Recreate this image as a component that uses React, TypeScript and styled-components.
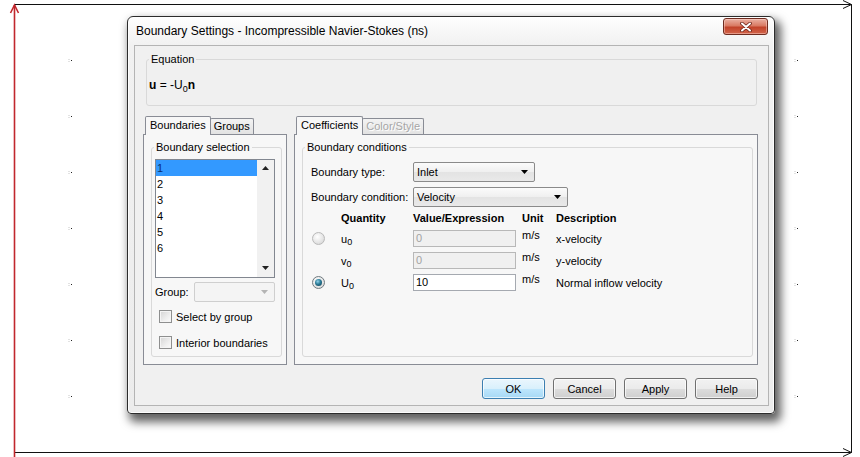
import React from 'react'
import styled, { createGlobalStyle } from 'styled-components'

const GlobalStyle = createGlobalStyle`
  html, body {
    margin: 0;
    padding: 0;
    background: #fff;
  }
  body {
    font-family: "Liberation Sans", Arial, sans-serif;
    font-size: 11px;
    color: #000;
  }
`

const dotRows = [60, 116, 172, 228, 284, 340, 396]
const listItems = ['1', '2', '3', '4', '5', '6']

const Arrow = ({ down, color = '#222' }: { down?: boolean; color?: string }) => (
  <svg width='7' height='4' viewBox='0 0 7 4'>
    <path d={down ? 'M0 0 H7 L3.5 4 Z' : 'M0 4 H7 L3.5 0 Z'} fill={color} />
  </svg>
)

function Backdrop() {
  return (
    <Canvas width={860} height={457} viewBox='0 0 860 457'>
      <g stroke='#111' strokeWidth={1} fill='none'>
        <path d='M15 4.5 H851.5 M15 452.5 H851.5 M851.5 4.5 V452.5' />
        <path d='M843 0.5 L851.5 4.5 L843 8.5 M843 448.5 L851.5 452.5 L843 456.5' />
      </g>
      <g stroke='#c1272d' strokeWidth={1.6} fill='none'>
        <path d='M14.5 5 V457' />
        <path d='M10.5 13 L14.5 5 L18.5 13' />
      </g>
      {dotRows.map(y => (
        <g key={y}>
          <rect x={68} y={y - 1} width={2} height={1} fill='#e2e2e2' />
          <rect x={68} y={y + 1} width={2} height={1} fill='#e2e2e2' />
          <rect x={71} y={y} width={1} height={1} fill='#222' />
          <rect x={794} y={y - 1} width={2} height={1} fill='#e2e2e2' />
          <rect x={794} y={y + 1} width={2} height={1} fill='#e2e2e2' />
          <rect x={797} y={y} width={1} height={1} fill='#222' />
        </g>
      ))}
    </Canvas>
  )
}

function CloseGlyph() {
  return (
    <svg width='12' height='10' viewBox='0 0 12 10'>
      <path d='M2 1.5 L10 8.5 M10 1.5 L2 8.5' stroke='#6b2418' strokeWidth={3.6} strokeLinecap='round' />
      <path d='M2 1.5 L10 8.5 M10 1.5 L2 8.5' stroke='#fff' strokeWidth={2} strokeLinecap='round' />
    </svg>
  )
}

export default function App() {
  return (
    <Desktop>
      <GlobalStyle />
      <Backdrop />
      <Window>
        <TitleBar>
          <Title>Boundary Settings - Incompressible Navier-Stokes (ns)</Title>
          <CloseButton><CloseGlyph /></CloseButton>
        </TitleBar>
        <Client>
          <EquationGroup>
            <Legend>Equation</Legend>
            <Formula>
              <b>u</b> = -U<Sub>0</Sub><b>n</b>
            </Formula>
          </EquationGroup>

          <Main>
            <Column>
              <TabStrip>
                <Tab $active>Boundaries</Tab>
                <Tab>Groups</Tab>
              </TabStrip>
              <TabPanel $width={144}>
                <Group>
                  <Legend>Boundary selection</Legend>
                  <ListBox>
                    <ListItems>
                      {listItems.map((item, i) => (
                        <ListItem key={item} $selected={i === 0}>{item}</ListItem>
                      ))}
                    </ListItems>
                    <ScrollBar>
                      <Arrow />
                      <Arrow down />
                    </ScrollBar>
                  </ListBox>
                  <GroupRow>
                    <span>Group:</span>
                    <DisabledCombo>
                      <Arrow down color='#b4b4b4' />
                    </DisabledCombo>
                  </GroupRow>
                  <CheckRow $first>
                    <CheckBox />
                    <span>Select by group</span>
                  </CheckRow>
                  <CheckRow>
                    <CheckBox />
                    <span>Interior boundaries</span>
                  </CheckRow>
                </Group>
              </TabPanel>
            </Column>

            <Column>
              <TabStrip>
                <Tab $active>Coefficients</Tab>
                <Tab $disabled>Color/Style</Tab>
              </TabStrip>
              <TabPanel $width={464}>
                <Group>
                  <Legend>Boundary conditions</Legend>
                  <FormGrid>
                    <FieldLabel>Boundary type:</FieldLabel>
                    <Combo $width={122}>
                      <span>Inlet</span>
                      <Arrow down color='#000' />
                    </Combo>
                    <FieldLabel>Boundary condition:</FieldLabel>
                    <Combo $width={155}>
                      <span>Velocity</span>
                      <Arrow down color='#000' />
                    </Combo>

                    <span />
                    <Head>Quantity</Head>
                    <Head>Value/Expression</Head>
                    <Head>Unit</Head>
                    <Head>Description</Head>

                    <Cell><Radio /></Cell>
                    <Cell>u<Sub>0</Sub></Cell>
                    <Cell><TextBox $disabled>0</TextBox></Cell>
                    <Unit>m/s</Unit>
                    <Cell>x-velocity</Cell>

                    <span />
                    <Cell>v<Sub>0</Sub></Cell>
                    <Cell><TextBox $disabled>0</TextBox></Cell>
                    <Unit>m/s</Unit>
                    <Cell>y-velocity</Cell>

                    <Cell><Radio $checked /></Cell>
                    <Cell>U<Sub>0</Sub></Cell>
                    <Cell><TextBox>10</TextBox></Cell>
                    <Unit>m/s</Unit>
                    <Cell>Normal inflow velocity</Cell>
                  </FormGrid>
                </Group>
              </TabPanel>
            </Column>
          </Main>

          <ButtonRow>
            <Button $default>OK</Button>
            <Button>Cancel</Button>
            <Button>Apply</Button>
            <Button>Help</Button>
          </ButtonRow>
        </Client>
      </Window>
    </Desktop>
  )
}

const Desktop = styled.div`
  position: relative;
  width: 860px;
  height: 457px;
  overflow: hidden;
  background: #fff;
`

const Canvas = styled.svg`
  position: absolute;
  left: 0;
  top: 0;
`

const Window = styled.div`
  position: absolute;
  left: 127px;
  top: 16px;
  width: 648px;
  height: 398px;
  box-sizing: border-box;
  display: flex;
  flex-direction: column;
  padding: 0 5px 7px 6px;
  border: 1px solid #2c2c2c;
  border-radius: 6px 6px 4px 4px;
  background: linear-gradient(180deg, #fefefe 0px, #f1f1f1 28px, #ececec 100%);
  box-shadow: inset 0 0 0 1px rgba(255, 255, 255, 0.85), 4px 6px 10px 2px rgba(0, 0, 0, 0.62);
`

const TitleBar = styled.div`
  display: flex;
  align-items: flex-start;
  justify-content: space-between;
  height: 28px;
  flex-shrink: 0;
`

const Title = styled.div`
  margin-top: 7px;
  padding-left: 2px;
  font-family: "Liberation Sans", Arial, sans-serif;
  font-size: 12px;
  line-height: 14px;
  color: #000;
`

const CloseButton = styled.div`
  width: 45px;
  height: 17px;
  margin-top: 1px;
  margin-right: 1px;
  box-sizing: border-box;
  display: flex;
  align-items: center;
  justify-content: center;
  border: 1px solid #6e2c20;
  border-radius: 3px;
  background: linear-gradient(180deg, #eab0a2 0%, #d97a63 45%, #c2432a 55%, #d2654b 100%);
  box-shadow: inset 0 0 0 1px rgba(255, 220, 210, 0.45);
`

const Client = styled.div`
  flex: 1;
  display: flex;
  flex-direction: column;
  padding: 7px 10px 0 8px;
  border: 1px solid #b4b4b4;
  background: #f0f0f0;
`

const Legend = styled.legend`
  padding: 0 2px;
  font-size: 11px;
  line-height: 13px;
  color: #000;
`

const EquationGroup = styled.fieldset`
  margin: 0 1px 0 3px;
  padding: 11px 2px 11px;
  min-width: 0;
  border: 1px solid #d9d9d9;
  border-radius: 3px;
`

const Formula = styled.div`
  font-size: 12px;
  line-height: 16px;
`

const Sub = styled.span`
  font-size: 9px;
  position: relative;
  top: 3px;
`

const Main = styled.div`
  display: flex;
  gap: 7px;
  margin-top: 10px;
`

const Column = styled.div`
  display: flex;
  flex-direction: column;
`

const TabStrip = styled.div`
  display: flex;
  align-items: flex-end;
  height: 18px;
  padding-left: 2px;
`

const Tab = styled.div<{ $active?: boolean; $disabled?: boolean }>`
  position: relative;
  z-index: ${p => (p.$active ? 1 : 0)};
  box-sizing: border-box;
  height: ${p => (p.$active ? '19px' : '16px')};
  margin-bottom: ${p => (p.$active ? '-1px' : '0')};
  padding: ${p => (p.$active ? '2px 4px 0' : '1px 3px 0')};
  border: 1px solid #898c95;
  border-bottom: none;
  border-radius: 2px 2px 0 0;
  background: ${p => (p.$active ? '#f7f7f7' : 'linear-gradient(180deg, #f3f3f3, #e2e2e2)')};
  color: ${p => (p.$disabled ? '#a6a6a6' : '#000')};
  text-shadow: ${p => (p.$disabled ? '1px 1px 0 #fff' : 'none')};
  line-height: 13px;
  white-space: nowrap;
  & + & {
    margin-left: -1px;
  }
`

const TabPanel = styled.div<{ $width: number }>`
  width: ${p => p.$width}px;
  height: 231px;
  box-sizing: border-box;
  display: flex;
  flex-direction: column;
  padding: 6px 4px 7px 7px;
  border: 1px solid #898c95;
  background: #f7f7f7;
`

const Group = styled.fieldset`
  flex: 1;
  display: flex;
  flex-direction: column;
  margin: 0;
  padding: 5px 2px 0;
  min-width: 0;
  border: 1px solid #d9d9d9;
  border-radius: 3px;
`

const ListBox = styled.div`
  width: 120px;
  height: 119px;
  margin-left: 1px;
  box-sizing: border-box;
  display: flex;
  border: 1px solid #828790;
  background: #fff;
`

const ListItems = styled.div`
  flex: 1;
`

const ListItem = styled.div<{ $selected?: boolean }>`
  height: 16px;
  line-height: 16px;
  padding-left: 1px;
  background: ${p => (p.$selected ? '#3399ff' : 'transparent')};
  color: ${p => (p.$selected ? '#0c2f6e' : '#000')};
`

const ScrollBar = styled.div`
  width: 17px;
  display: flex;
  flex-direction: column;
  align-items: center;
  justify-content: space-between;
  padding: 6px 0 7px;
  background: #f1f1f1;
`

const GroupRow = styled.div`
  display: flex;
  align-items: center;
  justify-content: space-between;
  width: 120px;
  margin: 4px 0 0 1px;
`

const DisabledCombo = styled.div`
  width: 81px;
  height: 20px;
  box-sizing: border-box;
  display: flex;
  align-items: center;
  justify-content: flex-end;
  padding-right: 6px;
  border: 1px solid #cfcfcf;
  border-radius: 2px;
  background: #f4f4f4;
`

const CheckRow = styled.div<{ $first?: boolean }>`
  display: flex;
  align-items: center;
  gap: 4px;
  height: 13px;
  margin: ${p => (p.$first ? '8px' : '13px')} 0 0 5px;
`

const CheckBox = styled.span`
  width: 13px;
  height: 13px;
  box-sizing: border-box;
  border: 1px solid #8e8f8f;
  background: linear-gradient(135deg, #d4d4d4 0%, #eeeeee 60%, #fbfbfb 100%);
  box-shadow: inset 0 0 0 1px #f4f4f4;
`

const FormGrid = styled.div`
  display: grid;
  grid-template-columns: 30px 72px 109px 34px 1fr;
  grid-template-rows: 20px 20px 13px 17px 17px 17px;
  row-gap: 5px;
  align-items: center;
  margin: 3px 0 0 6px;
`

const FieldLabel = styled.div`
  grid-column: 1 / 3;
  white-space: nowrap;
`

const Combo = styled.div<{ $width: number }>`
  grid-column: 3 / 6;
  width: ${p => p.$width}px;
  height: 20px;
  box-sizing: border-box;
  display: flex;
  align-items: center;
  justify-content: space-between;
  padding: 0 6px 0 3px;
  border: 1px solid #8a8a8a;
  border-radius: 2px;
  background: linear-gradient(180deg, #fbfbfb 0%, #efefef 50%, #e3e3e3 50%, #e9e9e9 100%);
`

const Head = styled.div`
  font-weight: bold;
  white-space: nowrap;
  margin-top: -2px;
`

const Cell = styled.div`
  display: flex;
  align-items: center;
  white-space: nowrap;
`

const Unit = styled.div`
  align-self: start;
  margin-top: -1px;
`

const Radio = styled.span<{ $checked?: boolean }>`
  position: relative;
  width: 13px;
  height: 13px;
  margin-left: 1px;
  box-sizing: border-box;
  border-radius: 50%;
  border: 1px solid ${p => (p.$checked ? '#6f7a80' : '#b9b9b9')};
  background: radial-gradient(circle at 40% 35%, #ffffff 0%, #e6e6e6 55%, #cfcfcf 100%);
  &::after {
    content: '';
    display: ${p => (p.$checked ? 'block' : 'none')};
    position: absolute;
    left: 2px;
    top: 2px;
    width: 7px;
    height: 7px;
    border-radius: 50%;
    background: radial-gradient(circle at 40% 35%, #8fd2ea 0%, #2a7a96 45%, #0d3a4c 100%);
  }
`

const TextBox = styled.div<{ $disabled?: boolean }>`
  width: 103px;
  height: 17px;
  box-sizing: border-box;
  padding-left: 2px;
  line-height: 15px;
  border: 1px solid ${p => (p.$disabled ? '#b8b8b8' : '#a5a9b0')};
  background: ${p => (p.$disabled ? '#f0f0f0' : '#fff')};
  color: ${p => (p.$disabled ? '#a3a3a3' : '#000')};
`

const ButtonRow = styled.div`
  display: flex;
  justify-content: flex-end;
  gap: 8px;
  margin-top: 13px;
`

const Button = styled.div<{ $default?: boolean }>`
  width: 63px;
  height: 21px;
  box-sizing: border-box;
  display: flex;
  align-items: center;
  justify-content: center;
  border: 1px solid ${p => (p.$default ? '#3c7fb1' : '#707070')};
  border-radius: 3px;
  background: ${p =>
    p.$default
      ? 'linear-gradient(180deg, #eaf6fd 0%, #d9f0fc 50%, #bee6fd 50%, #a7d9f5 100%)'
      : 'linear-gradient(180deg, #f2f2f2 0%, #ebebeb 50%, #dddddd 50%, #cfcfcf 100%)'};
  box-shadow: inset 0 0 0 1px rgba(255, 255, 255, 0.7);
`
